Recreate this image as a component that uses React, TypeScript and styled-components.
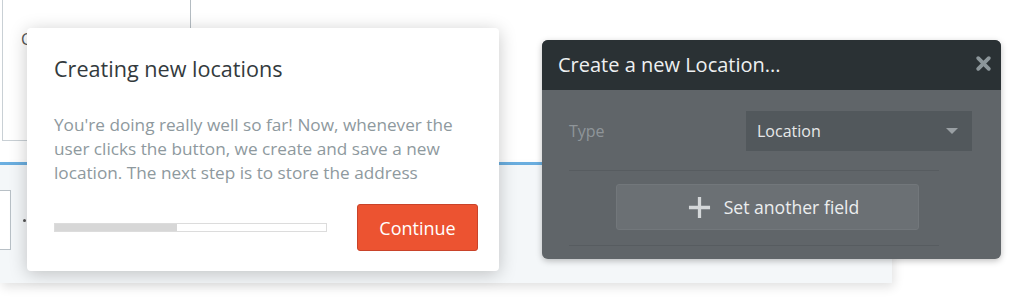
import React from "react";
import styled, { createGlobalStyle } from "styled-components";

const Global = createGlobalStyle`
  html, body { margin: 0; padding: 0; background: #ffffff; }
  body { font-family: "Open Sans", "Noto Sans", sans-serif; }
  * { box-sizing: border-box; }
`;

const Page = styled.div`
  position: relative;
  width: 1024px;
  height: 301px;
  overflow: hidden;
  background: #ffffff;
`;

const Editor = styled.div`
  display: flex;
  flex-direction: column;
`;

const TopArea = styled.div`
  height: 162px;
  padding-left: 2px;
`;

const ElementBox = styled.div`
  width: 189px;
  height: 141px;
  border-left: 1px solid #c9d0d5;
  border-right: 1px solid #b4bcc2;
  border-bottom: 1px solid #c9d0d5;
  padding: 28px 0 0 18px;
  color: #555;
  font-size: 16px;
`;

const BlueLine = styled.div`
  width: 892px;
  height: 3px;
  background: #6cb1e3;
`;

const LightPanel = styled.div`
  width: 892px;
  height: 118px;
  background: #f4f7f9;
  box-shadow: 2px 4px 10px rgba(0, 0, 0, 0.12);
  display: flex;
  align-items: center;
  gap: 12px;
  padding-bottom: 8px;
`;

const SmallInput = styled.div`
  width: 11px;
  height: 60px;
  border: 1px solid #b8c0c6;
  border-left: none;
  background: #fff;
`;

const Dot = styled.div`
  width: 3px;
  height: 3px;
  border-radius: 50%;
  background: #555;
`;

const Modal = styled.div`
  position: absolute;
  left: 27px;
  top: 28px;
  width: 472px;
  height: 243px;
  background: #ffffff;
  border-radius: 4px;
  box-shadow: 0 3px 18px rgba(0, 0, 0, 0.22);
  padding: 27px 21px 20px 27px;
  display: flex;
  flex-direction: column;
`;

const ModalTitle = styled.h2`
  margin: 0;
  font-size: 21.6px;
  line-height: 28px;
  font-weight: 400;
  color: #333a3d;
`;

const ModalBody = styled.p`
  margin: 30px 0 0 0;
  font-size: 17.2px;
  line-height: 24px;
  color: #8e999e;
  width: 420px;
`;

const ModalFooter = styled.div`
  margin-top: auto;
  display: flex;
  align-items: center;
  justify-content: space-between;
`;

const Progress = styled.div`
  width: 273px;
  height: 9px;
  border: 1px solid #dcdcdc;
  background: #ffffff;
  display: flex;
`;

const ProgressFill = styled.div`
  height: 100%;
  background: #d7d7d7;
`;

const ContinueButton = styled.button`
  width: 121px;
  height: 47px;
  border: 1px solid #c9432a;
  border-radius: 3px;
  background: #ec5331;
  color: #ffffff;
  font-family: "Open Sans", sans-serif;
  font-size: 18px;
  padding: 0;
`;

const Panel = styled.div`
  position: absolute;
  left: 542px;
  top: 40px;
  width: 459px;
  height: 219px;
  border-radius: 6px;
  overflow: hidden;
  background: #606569;
  box-shadow: 0 2px 6px rgba(0, 0, 0, 0.25);
  display: flex;
  flex-direction: column;
`;

const PanelHeader = styled.div`
  height: 50px;
  background: #2a3134;
  display: flex;
  align-items: center;
  justify-content: space-between;
  padding: 0 9px 2px 16px;
`;

const PanelTitle = styled.span`
  font-size: 20px;
  color: #eef0f1;
`;

const CloseIcon = styled.svg`
  width: 17px;
  height: 17px;
  margin-bottom: 2px;
`;

const PanelBody = styled.div`
  padding: 21px 29px 0 27px;
  display: flex;
  flex-direction: column;
`;

const FieldRow = styled.div`
  display: flex;
  align-items: center;
  justify-content: space-between;
  height: 40px;
`;

const FieldLabel = styled.span`
  font-size: 16px;
  color: #8f9599;
`;

const Dropdown = styled.div`
  width: 226px;
  height: 40px;
  background: #52585c;
  display: flex;
  align-items: center;
  justify-content: space-between;
  padding: 0 14px 0 11px;
  font-size: 16px;
  color: #e6e8e9;
`;

const Caret = styled.div`
  width: 0;
  height: 0;
  border-left: 6px solid transparent;
  border-right: 6px solid transparent;
  border-top: 6px solid #9aa0a4;
`;

const Separator = styled.div`
  width: 370px;
  height: 1px;
  background: #575c60;
`;

const AddFieldButton = styled.div`
  width: 303px;
  height: 46px;
  margin: 13px 0 15px 47px;
  background: #6b7074;
  border: 1px solid #72777b;
  border-radius: 3px;
  display: flex;
  align-items: center;
  justify-content: center;
  gap: 13px;
  padding-left: 12px;
  font-size: 17.6px;
  color: #eceeef;
`;

const PlusIcon = styled.svg`
  width: 23px;
  height: 23px;
`;

export default function App() {
  const progress = 45;
  return (
    <>
      <Global />
      <Page>
        <Editor>
          <TopArea>
            <ElementBox>C</ElementBox>
          </TopArea>
          <BlueLine />
          <LightPanel>
            <SmallInput />
            <Dot />
          </LightPanel>
        </Editor>

        <Modal>
          <ModalTitle>Creating new locations</ModalTitle>
          <ModalBody>
            You're doing really well so far! Now, whenever the user clicks the
            button, we create and save a new location. The next step is to
            store the address
          </ModalBody>
          <ModalFooter>
            <Progress>
              <ProgressFill style={{ width: `${progress}%` }} />
            </Progress>
            <ContinueButton>Continue</ContinueButton>
          </ModalFooter>
        </Modal>

        <Panel>
          <PanelHeader>
            <PanelTitle>Create a new Location...</PanelTitle>
            <CloseIcon viewBox="0 0 16 16">
              <path
                d="M3 3 L13 13 M13 3 L3 13"
                stroke="#8c969a"
                strokeWidth="3.6"
                strokeLinecap="round"
              />
            </CloseIcon>
          </PanelHeader>
          <PanelBody>
            <FieldRow>
              <FieldLabel>Type</FieldLabel>
              <Dropdown>
                <span>Location</span>
                <Caret />
              </Dropdown>
            </FieldRow>
            <Separator style={{ marginTop: 19 }} />
            <AddFieldButton>
              <PlusIcon viewBox="0 0 24 24">
                <path d="M12 1 V23 M1 12 H23" stroke="#d4d7d9" strokeWidth="3.4" />
              </PlusIcon>
              <span>Set another field</span>
            </AddFieldButton>
            <Separator />
          </PanelBody>
        </Panel>
      </Page>
    </>
  );
}
